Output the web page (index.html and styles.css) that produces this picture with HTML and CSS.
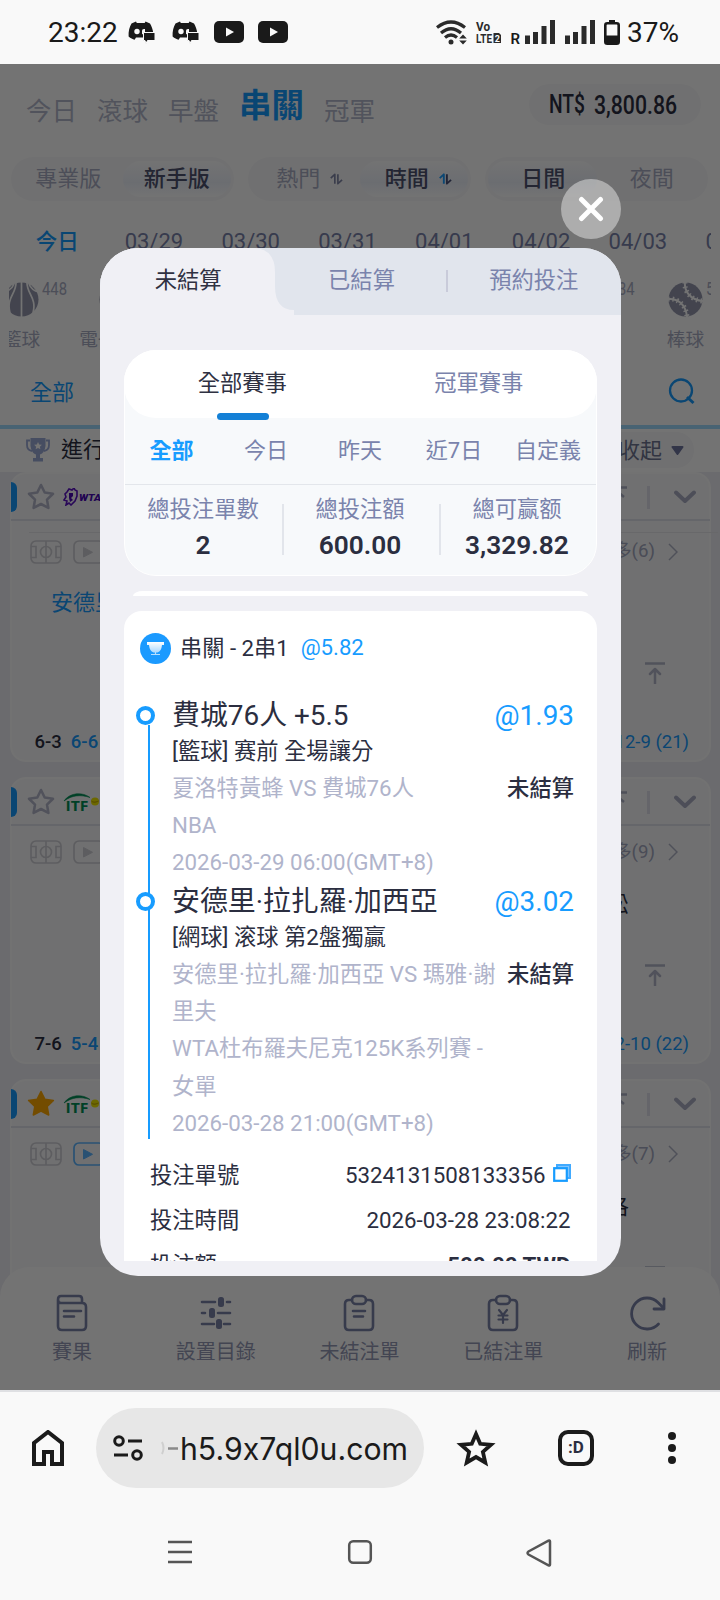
FILE: index.html
```html
<!DOCTYPE html>
<html lang="zh-Hant">
<head>
<meta charset="utf-8">
<title>未結算注單</title>
<link rel="stylesheet" href="styles.css">
</head>
<body>
<svg class="defs" width="0" height="0">
  <symbol id="chat" viewBox="0 0 27 24"><path fill="#1a1a1a" d="M8 1.5 3.5 3.5C1.5 7 .3 11 .6 16.500c2 1.700 4 2.700 6 3.200l1.400-2.300h7V13h10.300C24.700 9 23.500 6 22 3.500L17.500 1.500l-.8 1.500h-7.900z"/><circle cx="9" cy="11.500" r="2.700" fill="#f9f9f9"/><path d="M14 14.500V10.500q0-2 3-1.500v3.500" fill="#f9f9f9"/><path fill="#1a1a1a" stroke="#f9f9f9" stroke-width="1" d="M15.500 12.500H27v8h-7.500l-1.500 3-1-3h-1.500z"/></symbol>
  <symbol id="tube" viewBox="0 0 30 22"><rect width="30" height="22" rx="5" fill="#1a1a1a"/><path d="M12 6.500v9l8-4.500z" fill="#f9f9f9"/></symbol>
  <symbol id="signal" viewBox="0 0 31 24"><path fill="#2b2b2b" d="M0 15.500h5V24H0zM8 12h5v12H8zM16.500 6h5v18h-5zM25 0h5v24h-5z"/></symbol>
  <symbol id="swap" viewBox="0 0 14 12"><path fill="none" stroke="#8288a8" stroke-width="1.800" stroke-linejoin="round" d="M.8 5 5.200 1v10"/><path fill="none" stroke="#8288a8" stroke-width="1.800" stroke-linejoin="round" d="M8.500 1v10L13 7"/></symbol>
  <symbol id="swap-on" viewBox="0 0 14 12"><path fill="none" stroke="#179cff" stroke-width="2" stroke-linejoin="round" d="M.8 5 5.200 1v10"/><path fill="none" stroke="#4a5078" stroke-width="2" stroke-linejoin="round" d="M8.500 1v10L13 7"/></symbol>
  <symbol id="star" viewBox="0 0 28 28"><path fill="none" stroke="#b4b7cb" stroke-width="2.600" stroke-linejoin="round" d="m14 2 3.700 7.500 8.300 1.200-6 5.900 1.400 8.300-7.400-3.900-7.400 3.900L8 16.600 2 10.700l8.300-1.200z"/></symbol>
  <symbol id="star-on" viewBox="0 0 28 28"><path fill="#ffa800" stroke="#ffa800" stroke-width="1.500" stroke-linejoin="round" d="m14 1.500 3.800 7.700 8.600 1.200-6.200 6.100 1.500 8.500-7.700-4-7.700 4 1.500-8.500-6.200-6.100 8.600-1.200z"/></symbol>
  <symbol id="court" viewBox="0 0 32 24"><g fill="none" stroke="#cfcfd6" stroke-width="1.700"><rect x="1" y="1" width="30" height="22" rx="5"/><path d="M16 1v22M1 6.500h5v11H1M31 6.500h-5v11h5"/><circle cx="16" cy="12" r="5.500"/></g></symbol>
  <symbol id="play" viewBox="0 0 32 24"><rect x="1" y="1" width="30" height="22" rx="5" fill="none" stroke="currentColor" stroke-width="1.700"/><path fill="currentColor" stroke="currentColor" stroke-linejoin="round" d="M10.500 7.500v9.500l9-4.700z"/></symbol>
  <symbol id="to-bottom" viewBox="0 0 20 22"><path d="M1 1.500h18M10 2v10M10 6l6 5" fill="none" stroke="#aeb1c6" stroke-width="2.500"/></symbol>
  <symbol id="to-top" viewBox="0 0 20 22"><path d="M.5 1.500h19M10 21.500V7.500M5 12l5-5 5 5" fill="none" stroke="#b3b6ca" stroke-width="2.500" stroke-linejoin="round" stroke-linecap="round"/></symbol>
  <symbol id="down" viewBox="0 0 22 14"><path d="m2 2.500 9 8.500 9-8.500" fill="none" stroke="#aaaec4" stroke-width="4" stroke-linecap="round" stroke-linejoin="round"/></symbol>
  <symbol id="next" viewBox="0 0 10 18"><path d="m1 1 8 8-8 8" fill="none" stroke="#b0b3c6" stroke-width="1.500"/></symbol>
  <symbol id="itf" viewBox="0 0 38 18"><path d="M1 8C7-1 20-1 27 4.500 18 1.500 9 2 1 8z" fill="#008f55" stroke="#008f55" stroke-width=".6"/><text x="2.500" y="17.500" class="logo-itf" textLength="23" lengthAdjust="spacingAndGlyphs">ITF</text><circle cx="32" cy="8.500" r="4" fill="#f0e600"/><path d="M28.500 8c2 2 5 1 7 0" stroke="#b89c00" fill="none"/></symbol>
</svg>

<div class="screen">
  <header class="status">
    <span class="clock">23:22</span>
    <span class="notices">
      <svg width="27" height="24"><use href="#chat"/></svg>
      <svg width="27" height="24"><use href="#chat"/></svg>
      <svg width="30" height="22"><use href="#tube"/></svg>
      <svg width="30" height="22"><use href="#tube"/></svg>
    </span>
    <span class="system">
      <svg class="wifi" width="31" height="25" viewBox="0 0 31 25"><g fill="none" stroke="#2b2b2b" stroke-width="3.200"><path d="M1 7.500q14-11 28 0M5 13q10-8.500 20 0M9 17.500q6-5 12 0"/></g><circle cx="15" cy="22" r="2.500" fill="#2b2b2b"/><path d="m27 14.500 3.800 4h-7.600zM27 24.500l3.800-4h-7.600z" fill="#2b2b2b"/></svg>
      <svg class="volte" width="26" height="24" viewBox="0 0 26 24"><text x="0" y="11" class="tiny" textLength="14" lengthAdjust="spacingAndGlyphs">Vo</text><text x="0" y="23" class="tiny" textLength="16" lengthAdjust="spacingAndGlyphs">LTE</text><path d="M17.500 13H23l2 2v8h-7.500z" fill="#2b2b2b"/><text x="18.700" y="21.500" class="tiny-inv">2</text></svg>
      <span class="roam">R</span>
      <svg class="sig1" width="31" height="24"><use href="#signal"/></svg>
      <svg class="sig2" width="31" height="24"><use href="#signal"/></svg>
      <svg class="batt" width="16" height="25" viewBox="0 0 16 25"><path d="M5 0h6v3H5z" fill="#1a1a1a"/><rect x="1.300" y="3.300" width="13.400" height="20.400" rx="2" fill="none" stroke="#1a1a1a" stroke-width="2.600"/><path d="M2 15.500h12V24H2z" fill="#1a1a1a"/></svg>
      <span class="percent">37%</span>
    </span>
  </header>

  <main class="app">
    <nav class="main-tabs">
      <span>今日</span><span>滾球</span><span>早盤</span><span class="on">串關</span><span>冠軍</span>
      <div class="balance"><svg width="130" height="30" viewBox="0 0 130 30"><text x="0" y="22.500" textLength="36" lengthAdjust="spacingAndGlyphs">NT$</text><text x="45" y="24" textLength="83" lengthAdjust="spacingAndGlyphs">3,800.86</text></svg></div>
    </nav>
    <div class="filters">
      <div class="pill"><span>專業版</span><span class="on">新手版</span></div>
      <div class="pill sort"><span>熱門<svg width="13" height="12"><use href="#swap"/></svg></span><span class="on">時間<svg width="13" height="12"><use href="#swap-on"/></svg></span></div>
      <div class="pill"><span class="on">日間</span><span>夜間</span></div>
    </div>
    <div class="dates"><b>今日</b><span>03/29</span><span>03/30</span><span>03/31</span><span>04/01</span><span>04/02</span><span>04/03</span><span>04/04</span></div>
    <div class="sports">
      <div class="sport"><i><svg width="35" height="35" viewBox="0 0 35 35"><circle cx="17.500" cy="17.500" r="17" fill="#9598ae"/><path d="M17.500 0v35M10 2c-2 5-5 7-10 8M25 2c2 5 5 7 10 8M12 1C12 12 2 16 6 31M23 1c0 11 10 15 6 30" fill="none" stroke="#fff" stroke-width="1.700"/></svg><small>448</small></i><span>籃球</span></div>
      <div class="sport second"><i><svg width="35" height="35" viewBox="0 0 35 35"><circle cx="17.500" cy="17.500" r="17" fill="#9598ae"/></svg></i><span>電子籃球</span></div>
      <div class="sport spacer"></div>
      <div class="sport"><i><svg width="35" height="35" viewBox="0 0 35 35"><circle cx="17.500" cy="17.500" r="17" fill="#9598ae"/></svg><small class="wide">34</small></i><span>足球</span></div>
      <div class="sport"><i><svg width="35" height="35" viewBox="0 0 35 35"><circle cx="17.500" cy="17.500" r="17" fill="#9598ae"/><path d="M0 17c9-1 18 5 19 18M17 0c-1 9 5 18 18 19" fill="none" stroke="#fff" stroke-width="2"/><path d="M0 17c9-1 18 5 19 18M17 0c-1 9 5 18 18 19" fill="none" stroke="#fff" stroke-width="5" stroke-dasharray="1.500 3"/></svg><small>5</small></i><span>棒球</span></div>
    </div>
    <div class="searchbar"><span>全部</span><svg width="27" height="27" viewBox="0 0 27 27"><circle cx="13" cy="12.500" r="11" fill="none" stroke="#179cff" stroke-width="2.300"/><path d="m19 19 6.500 6" stroke="#179cff" stroke-width="3"/></svg></div>
    <div class="live">
      <svg width="24" height="24" viewBox="0 0 24 24"><path d="M4 2.500H1V7q0 5 5 6M20 2.500h3V7q0 5-5 6" fill="none" stroke="#9caad8" stroke-width="1.800"/><path d="M4.500 0h15v8q-1 7-5.500 8.500V20h3v3.500H7V20h3v-3.500Q5.500 15 4.500 8z" fill="#9caad8"/><path d="m12 4 1.200 2.400 2.700.4-2 1.900.5 2.600-2.400-1.200-2.400 1.200.5-2.600-2-1.900 2.700-.4z" fill="#fff"/></svg>
      <span>進行中</span>
      <div class="fold">收起<svg width="13" height="10" viewBox="0 0 13 10"><path d="M1.500 2h10L6.500 9z" fill="#6f76a0" stroke="#6f76a0" stroke-width="2" stroke-linejoin="round"/></svg></div>
    </div>
    <div class="matches">
      <section class="card ruled">
        <div class="head"><i class="mark"></i><svg width="28" height="28"><use href="#star"/></svg><svg class="logo" width="38" height="18" viewBox="0 0 38 18"><path d="M3 9 2 6l2-2 2-3 3 1 2-2 1 2 2 1v5l-2 5-4 4-2-2-3 2 1-4-3-1z" fill="none" stroke="#5b12c4" stroke-width="1.600"/><path d="M6 5h4v3l-2 2 2 2-3 2-1-4z" fill="#4b09b5"/><text class="logo-wta" x="16" y="12.500" textLength="22" lengthAdjust="spacingAndGlyphs">WTA</text></svg><svg class="bot" width="20" height="22"><use href="#to-bottom"/></svg><i class="bar"></i><svg width="22" height="14"><use href="#down"/></svg></div>
        <div class="tools"><svg width="32" height="24"><use href="#court"/></svg><svg class="off" width="32" height="24"><use href="#play"/></svg><span>更多(6)</span><svg width="10" height="18"><use href="#next"/></svg></div>
        <div class="teams"><em>安德里</em></div>
        <svg class="up" width="20" height="22"><use href="#to-top"/></svg>
        <div class="score"><b>6-3</b><b class="blue">6-6</b><span>12-9 (21)</span></div>
      </section>
      <section class="card">
        <div class="head"><i class="mark"></i><svg width="28" height="28"><use href="#star"/></svg><svg class="logo" width="38" height="18"><use href="#itf"/></svg><svg class="bot" width="20" height="22"><use href="#to-bottom"/></svg><i class="bar"></i><svg width="22" height="14"><use href="#down"/></svg></div>
        <div class="tools"><svg width="32" height="24"><use href="#court"/></svg><svg class="off" width="32" height="24"><use href="#play"/></svg><span>更多(9)</span><svg width="10" height="18"><use href="#next"/></svg></div>
        <div class="teams"><span>松</span></div>
        <svg class="up" width="20" height="22"><use href="#to-top"/></svg>
        <div class="score"><b>7-6</b><b class="blue">5-4</b><span>12-10 (22)</span></div>
      </section>
      <section class="card">
        <div class="head"><i class="mark"></i><svg width="28" height="28"><use href="#star-on"/></svg><svg class="logo" width="38" height="18"><use href="#itf"/></svg><svg class="bot" width="20" height="22"><use href="#to-bottom"/></svg><i class="bar"></i><svg width="22" height="14"><use href="#down"/></svg></div>
        <div class="tools"><svg width="32" height="24"><use href="#court"/></svg><svg class="live-on" width="32" height="24"><use href="#play"/></svg><span>更多(7)</span><svg width="10" height="18"><use href="#next"/></svg></div>
        <div class="teams"><span>洛</span></div>
        <svg class="up" width="20" height="22"><use href="#to-top"/></svg>
      </section>
    </div>
    <nav class="bottom">
      <div><svg width="36" height="38" viewBox="0 0 36 38"><g fill="none" stroke="#7b83a8" stroke-width="2.600" stroke-linecap="round"><path d="M4 6v26q0 4 4 4h20q4 0 4-4V13q0-4-4-4H7q-3 0-3-3.500T7 2h18q3 0 3 3v4"/><path d="M10 17h17M10 22.500h10"/></g></svg>賽果</div>
      <div><svg width="36" height="38" viewBox="0 0 36 38"><path d="M4 8h13M29 8h3M4 19h3M20 19h12M4 30h12M26 30h6" stroke="#7b83a8" stroke-width="2.600" stroke-linecap="round"/><g fill="#7b83a8"><rect x="20" y="3" width="6" height="10" rx="2.500"/><rect x="11" y="14" width="6" height="10" rx="2.500"/><rect x="18" y="25" width="6" height="10" rx="2.500"/></g></svg>設置目錄</div>
      <div><svg width="36" height="38" viewBox="0 0 36 38"><g fill="none" stroke="#7b83a8" stroke-width="2.600" stroke-linecap="round"><path d="M11 6H8q-4 0-4 4v22q0 4 4 4h20q4 0 4-4V10q0-4-4-4h-3"/><rect x="11" y="2" width="14" height="8" rx="4"/><path d="M12 17h12M13 22.500h9"/></g></svg>未結注單</div>
      <div><svg width="36" height="38" viewBox="0 0 36 38"><g fill="none" stroke="#7b83a8" stroke-width="2.600" stroke-linecap="round"><path d="M11 6H8q-4 0-4 4v22q0 4 4 4h20q4 0 4-4V10q0-4-4-4h-3"/><rect x="11" y="2" width="14" height="8" rx="4"/><path d="m14 16 4 5 4-5M18 21v8M13.500 21.500h9M13.500 25.500h9" stroke-width="2.200"/></g></svg>已結注單</div>
      <div><svg width="38" height="38" viewBox="0 0 38 38"><g fill="none" stroke="#7b83a8" stroke-width="2.800" stroke-linecap="round" stroke-linejoin="round"><path d="M30.500 30A15.500 15.500 0 1 1 30 8.500L35.500 14"/><path d="M36 5v10H26"/></g></svg>刷新</div>
    </nav>
    <div class="veil"></div>

    <button class="close"><svg width="26" height="26" viewBox="0 0 26 26"><path d="m3.500 3.500 19 19M22.500 3.500l-19 19" stroke="#fff" stroke-width="5" stroke-linecap="round"/></svg></button>
    <div class="modal">
      <div class="modal-tabs">
        <svg class="tab-shape" width="200" height="67" viewBox="0 0 200 67"><path d="M0 0h152q23 0 23 24v14q0 24 19 24v5H0z" fill="#f0f0f5"/></svg>
        <span class="on">未結算</span><span>已結算</span><i></i><span>預約投注</span>
      </div>
      <div class="modal-body">
        <div class="summary">
          <div class="kinds"><span class="on">全部賽事</span><span>冠軍賽事</span></div>
          <div class="range"><b>全部</b><span>今日</span><span>昨天</span><span>近7日</span><span>自定義</span></div>
          <div class="stats">
            <div><span>總投注單數</span><b>2</b></div>
            <div><span>總投注額</span><b>600.00</b></div>
            <div><span>總可赢额</span><b>3,329.82</b></div>
          </div>
        </div>
        <div class="sliver"></div>
        <div class="ticket">
          <div class="ticket-head"><svg width="31" height="31" viewBox="0 0 31 31"><defs><linearGradient id="cup" x2="0" y2="1"><stop offset="0" stop-color="#fff"/><stop offset="1" stop-color="#a9d8ff"/></linearGradient></defs><circle cx="15.500" cy="15.500" r="15.500" fill="#1b9aff"/><path d="M7 9h17v3h-2q-.5 6-4.500 7.500h-4Q9.500 18 9 12H7z" fill="url(#cup)"/><path d="M15.500 19v2M11 21.500h9" stroke="#b5deff" stroke-width="1.200"/></svg><span>串關 - 2串1</span><em>@5.82</em></div>
          <div class="legs">
            <div class="leg">
              <div class="title"><span>費城76人 +5.5</span><em>@1.93</em></div>
              <p>[籃球] 赛前 全場讓分</p>
              <div class="info"><div>夏洛特黃蜂 VS 費城76人<br>NBA<br>2026-03-29 06:00(GMT+8)</div><b>未結算</b></div>
            </div>
            <div class="leg">
              <div class="title"><span>安德里·拉扎羅·加西亞</span><em>@3.02</em></div>
              <p>[網球] 滚球 第2盤獨贏</p>
              <div class="info"><div>安德里·拉扎羅·加西亞 VS 瑪雅·謝<br>里夫<br>WTA杜布羅夫尼克125K系列賽 -<br>女單<br>2026-03-28 21:00(GMT+8)</div><b>未結算</b></div>
            </div>
          </div>
          <div class="facts">
            <div><span>投注單號</span><span>5324131508133356<svg width="18" height="18" viewBox="0 0 18 18"><path d="M4 4V1h13v13h-3z" fill="#80c5ff" stroke="#41aaff" stroke-width="2"/><rect x="1.200" y="4.200" width="12.600" height="12.600" fill="#fff" stroke="#179cff" stroke-width="2.200"/></svg></span></div>
            <div><span>投注時間</span><span>2026-03-28 23:08:22</span></div>
            <div><span>投注額</span><b>500.00 TWD</b></div>
          </div>
        </div>
      </div>
    </div>
  </main>

  <footer class="browser">
    <div class="toolbar">
      <svg class="home" width="32" height="36" viewBox="0 0 32 36"><path d="M2 34V13L16 2l14 11v21H20V22h-8v12z" fill="none" stroke="#1b1b1b" stroke-width="4"/></svg>
      <div class="url">
        <svg width="30" height="26" viewBox="0 0 30 26"><g fill="none" stroke="#1b1b1b" stroke-width="3"><circle cx="6" cy="6" r="4.300"/><path d="M15 6h14M1 20h14"/><circle cx="24" cy="20" r="4.300"/></g></svg>
        <svg class="address" width="250" height="40" viewBox="0 0 250 40"><path d="M3 14q3 6 0 12" stroke="#cfcfcf" fill="none" stroke-width="2"/><path d="M9 20.500h10" stroke="#8a8a8a" stroke-width="2.500"/><text x="21" y="31.500" textLength="228" lengthAdjust="spacingAndGlyphs">h5.9x7ql0u.com</text></svg>
      </div>
      <svg class="fav" width="40" height="38" viewBox="0 0 40 38"><path d="m20 5 4.200 9.800 10.800 1-8.100 7.100 2.400 10.600L20 28l-9.300 5.500 2.400-10.600L5 15.800l10.800-1z" fill="none" stroke="#1b1b1b" stroke-width="3.800"/></svg>
      <div class="tabs-count">:D</div>
      <svg class="more" width="8" height="32" viewBox="0 0 8 32"><g fill="#1b1b1b"><circle cx="4" cy="4" r="4"/><circle cx="4" cy="16" r="4"/><circle cx="4" cy="28" r="4"/></g></svg>
    </div>
    <div class="system-nav">
      <svg width="26" height="26" viewBox="0 0 26 26"><path d="M1 3h24M1 13h24M1 23h24" stroke="#555" stroke-width="2.600"/></svg>
      <svg width="26" height="26" viewBox="0 0 26 26"><rect x="2.200" y="2.200" width="21.600" height="21.600" rx="4" fill="none" stroke="#555" stroke-width="2.500"/></svg>
      <svg width="26" height="28" viewBox="0 0 26 28"><path d="M24 2.500v23q0 1.500-1.500.8L2.500 15.500q-2-1.500 0-3L22.500 1.700q1.500-.7 1.500.8z" fill="none" stroke="#555" stroke-width="2.500"/></svg>
    </div>
  </footer>
</div>
</body>
</html>
```

FILE: styles.css
```css
*, *::before, *::after { box-sizing: border-box; }
body { margin: 0; font-family: Roboto, "Noto Sans CJK TC", sans-serif; font-size: 22px; color: #2b2e40; background: #f9f9f9; }
svg { display: block; flex: none; }
.defs { position: absolute; }
i, em { font-style: normal; }
p { margin: 0; }
.screen { width: 720px; height: 1600px; overflow: hidden; display: flex; flex-direction: column; }

.status { height: 64px; display: flex; align-items: center; padding: 0 41px 0 48px; background: #f9f9f9; color: #1a1a1a; }
.clock, .percent { font-size: 28px; }
.notices { display: flex; align-items: center; gap: 16px; margin-left: 10px; }
.notices svg:nth-child(2) { margin-left: 1px; }
.notices svg:nth-child(3) { margin-left: -1px; }
.notices svg:nth-child(4) { margin-left: -2px; }
.system { margin-left: auto; display: flex; align-items: center; }
.volte { margin-left: 9px; overflow: visible; }
.tiny { font-size: 13.500px; font-weight: 700; fill: #2b2b2b; }
.tiny-inv { font-size: 9px; font-weight: 700; fill: #fff; }
.roam { font-size: 15px; font-weight: 600; margin: 13px 5px 0 8px; }
.sig2 { margin-left: 9px; }
.batt { margin: 0 7px 0 8px; }

.app { height: 1326px; position: relative; display: flex; flex-direction: column; background: #fff; overflow: hidden; }
.main-tabs { height: 93px; padding: 19px 19px 0 26px; display: flex; align-items: baseline; gap: 20px; font-size: 25.500px; color: #b4b8cd; line-height: 46px; }
.main-tabs span { padding-top: 3px; }
.main-tabs .on { font-size: 32.500px; font-weight: 700; color: #149cff; margin-bottom: 3px; transform: translateY(-3px); }
.balance { margin-left: auto; align-self: flex-start; margin-top: 1px; width: 172px; height: 41px; border-radius: 21px; background: #f9f9fa; display: flex; justify-content: center; padding: 6px 3px 0 0; }
.balance text { font-size: 25px; font-weight: 500; fill: #2b2e40; }
.filters { display: flex; gap: 14px; padding: 0 11px; }
.pill { width: 223px; height: 44px; border-radius: 22px; background: #f9f9fb; display: flex; padding: 4px 3px; line-height: 34px; }
.pill span { flex: 1; display: flex; justify-content: center; align-items: center; gap: 10px; color: #a9adc4; padding-bottom: 1px; }
.pill.sort span { padding-left: 9px; }
.pill:last-child span { padding-left: 2px; }
.pill .on { font-weight: 500; color: #4e5270; border-radius: 19px; background: linear-gradient(#fff, #eef2fb 60%, #fff); }
.dates { display: flex; margin-top: 24px; height: 34px; line-height: 34px; color: #7a83ac; overflow: hidden; margin-right: 9px; }
.dates > * { width: 96.800px; flex: none; text-align: center; }
.dates b { width: 105.500px; padding-left: 9px; color: #149cff; font-weight: 500; font-size: 21.500px; }
.sports { height: 91px; padding-top: 23px; margin: 0 9px; overflow: hidden; display: flex; justify-content: space-between; }
.sport { width: 97px; flex: none; text-align: center; font-size: 18.700px; line-height: 24px; color: #a9adc4; }
.sport:first-child { margin-left: -36px; }
.sport.second { margin-left: -2px; }
.sport:last-child { margin-right: -23px; }
.sport:nth-child(4) { margin-right: -1px; }
.sport.spacer { flex: 1; }
.sport i { display: flex; width: 35px; margin: 0 auto 11px; }
.sport span { white-space: nowrap; }
.sport small { font-size: 18.500px; line-height: 14px; margin: 0 0 0 3px; transform: scaleX(.8); transform-origin: left; height: 14px; }
.sport small.wide { margin-left: 11px; }
.searchbar { height: 75px; padding: 5px 25px 0 30px; display: flex; justify-content: space-between; align-items: center; color: #149cff; }
.searchbar svg { margin-top: 3px; }
.live { border-top: 4px solid #a0dbff; height: 47px; flex: none; padding: 0 26px 1px; display: flex; align-items: center; }
.live > span { margin: 0 0 1px 11px; line-height: 36px; }
.fold { margin-left: auto; height: 36px; width: 100px; border-radius: 18px; background: #f8f8fa; color: #6f7593; display: flex; align-items: center; justify-content: flex-end; gap: 9px; padding: 0 10px 4px 0; }
.fold svg { margin-top: 3px; }
.matches { background: #eeeef3; flex: 1; padding: 0 9px 30px 10px; display: flex; flex-direction: column; gap: 15px; min-height: 0; overflow: hidden; }
.card { flex: none; height: 287px; border-radius: 16px; background: #f9f9fa; border: 2px solid #fcfcfc; display: flex; flex-direction: column; }
.ruled { height: 290px; }
.head { height: 47px; flex: none; border-bottom: 2px solid #e0e2ec; display: flex; align-items: center; padding-right: 14px; margin: 0 -1px; padding-top: 1px; }
.mark { width: 6px; height: 30px; background: #179cff; border-radius: 0 6px 6px 0; margin-right: 10px; }
.head .logo { margin-left: 8px; }
.bot { margin-left: auto; }
.bar { width: 3px; height: 23px; background: #e0e1ea; margin: 0 24px 0 19px; }
.logo-itf { font: 700 15px "Open Sans", sans-serif; fill: #008f55; }
.logo-wta { font: italic 900 9px Roboto, sans-serif; fill: #4b09b5; }
.tools { display: flex; align-items: center; margin-top: 14px; padding: 0 31px 0 18px; height: 24px; color: #a4a8c0; }
.ruled .tools { margin-top: 11px; padding-top: 8px; height: 31px; position: relative; }
.ruled .tools::before { content: ""; position: absolute; top: 0; left: 17px; right: -9px; border-top: 1px solid #e6e7ec; }
.tools svg:nth-child(2) { margin-left: 11px; }
.tools span { margin: 0 13px 0 auto; font-size: 18.700px; line-height: 20px; padding-bottom: 1px; }
.off { color: #cfcfd6; }
.live-on { color: #5cb4ff; }
.teams { height: 32px; margin-top: 25px; padding: 0 80px 0 39px; line-height: 31px; display: flex; }
.ruled .teams { margin-top: 24px; }
.teams em { color: #179cff; }
.teams span { margin-left: auto; }
.up { margin: 43px 44px 0 auto; }
.ruled .up { margin-top: 43px; }
.score { display: flex; gap: 9px; margin: auto 20px 6px 22.500px; font-size: 18.500px; line-height: 24px; }
.score b { font-weight: 500; }
.score .blue, .score span { color: #179cff; }
.score span { margin-left: auto; }
.bottom { height: 123px; flex: none; display: grid; grid-template-columns: repeat(5, 1fr); background: #fff; border-radius: 30px 30px 0 0; margin-top: -30px; padding: 27px 1px 0 0; font-size: 20px; line-height: 41px; color: #9499b6; position: relative; }
.bottom div { display: flex; flex-direction: column; align-items: center; }
.veil { position: absolute; inset: 0; background: rgba(0, 0, 0, .55); }

.close { position: absolute; left: 560.500px; top: 115px; width: 60px; height: 60px; border: 0; padding: 0; border-radius: 50%; background: rgba(255, 255, 255, .42); display: flex; align-items: center; justify-content: center; }
.modal { position: absolute; left: 100px; top: 184px; width: 520.500px; height: 1027.500px; border-radius: 38px; background: #f0f0f5; overflow: hidden; padding-bottom: 14.500px; display: flex; flex-direction: column; font-size: 22.300px; }
.modal-tabs { height: 67px; flex: none; background: #e1e5ed; display: flex; line-height: 64.500px; color: #7a83ac; position: relative; padding-left: 1.500px; }
.tab-shape { position: absolute; left: 0; top: 0; }
.modal-tabs span { width: 174px; text-align: center; position: relative; }
.modal-tabs .on { color: #2f3142; }
.modal-tabs i { width: 2px; height: 22px; background: #c9cbda; margin: 22px -1px 0 -2px; }
.modal-body { padding: 35px 23.500px 0 24px; display: flex; flex-direction: column; flex: 1; min-height: 0; }
.summary { height: 226px; flex: none; border-radius: 32px; background: #f7f9fb; border: 1px solid #fff; color: #7a83ac; }
.kinds { height: 68px; margin: -1px; background: #fff; border-radius: 32px; display: flex; line-height: 66.500px; text-align: center; }
.kinds span { flex: 1; position: relative; }
.kinds .on { color: #2f3142; }
.kinds .on::after { content: ""; position: absolute; left: 92.500px; top: 63px; width: 52px; height: 7px; border-radius: 3.500px; background: #1480d6; }
.range { height: 68px; padding-right: 1px; border-bottom: 1px solid #e3e6eb; display: grid; grid-template-columns: repeat(5, 1fr); line-height: 67px; text-align: center; font-size: 22px; }
.range b { color: #179cff; margin-left: -1px; }
.stats { display: grid; grid-template-columns: repeat(3, 1fr); text-align: center; padding-top: 6px; }
.stats div { display: flex; flex-direction: column; line-height: 36px; padding-right: 1px; }
.stats div + div { background: linear-gradient(#e2e5eb, #e2e5eb) 0 13px / 2px 51px no-repeat; }
.stats b { font-size: 26.300px; font-weight: 600; color: #2b2e40; }
.sliver { height: 5px; flex: none; background: #fff; margin: 15px 9px; border-radius: 10px 10px 0 0 / 5px 5px 0 0; }
.ticket { flex: 1; min-height: 0; overflow: hidden; background: #fff; border-radius: 18px 18px 0 0; }
.ticket em { color: #179cff; }
.ticket-head { display: flex; align-items: center; height: 74px; padding-left: 16px; font-size: 22.200px; }
.ticket-head span { margin: 0 12px 0 9px; padding-bottom: 5px; }
.ticket-head em { padding-bottom: 3px; }
.legs { margin: 12px 23px 0 24px; height: 409px; padding-left: 24px; line-height: 37.200px; position: relative; }
.legs::before { content: ""; position: absolute; left: 0; top: 28px; bottom: -33px; width: 2px; background: #179cff; }
.leg { position: relative; }
.leg::before { content: ""; position: absolute; left: -36px; top: 9px; width: 19px; height: 19px; border: 4px solid #179cff; border-radius: 50%; background: #fff; }
.title, .info { display: flex; justify-content: space-between; }
.title { height: 35.700px; font-size: 27.900px; line-height: 37px; }
.info { color: #b0b4cb; white-space: nowrap; padding-bottom: 1.500px; }
.info b { color: #2b2e40; font-weight: 500; }
.facts { padding: 47px 26.500px 0 26px; line-height: 45px; }
.facts div { height: 45px; display: flex; justify-content: space-between; }
.facts div > :last-child { display: flex; }
.facts svg { margin: 11px 0 0 7px; }

.browser { flex: 1; border-top: 2px solid #dfe0e3; background: #f9f9f9; }
.toolbar { height: 112px; padding: 0 44px 0 32px; display: flex; align-items: center; }
.url { width: 328px; height: 80px; margin: 0 32px; border-radius: 40px; background: #e7e7e7; display: flex; align-items: center; padding-left: 17px; }
.address { margin-left: 16px; overflow: visible; }
.address text { font-family: Inter, sans-serif; font-size: 31px; font-feature-settings: "calt" 0; fill: #1b1b1b; }
.tabs-count { width: 36px; height: 36px; border: 4px solid #1b1b1b; border-radius: 10px; margin: 0 74px 0 62px; font-size: 17px; font-weight: 700; line-height: 27px; text-align: center; }
.system-nav { display: flex; justify-content: space-between; padding: 35px 168px 0 167px; }
```
